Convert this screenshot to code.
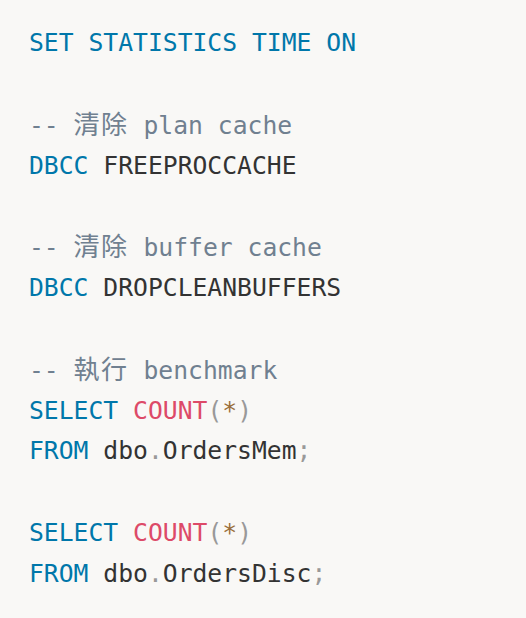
const kw = 'text-[#0077aa]';
const fn = 'text-[#dd4a68]';
const pu = 'text-[#999999]';
const op = 'text-[#9a6e3a]';
const cm = 'text-[#708090]';

function Line({ children }) {
    return <div className="h-[40.85px] whitespace-pre">{children}</div>;
}

// CJK glyphs in the comments run a little wider than 1em
function Han({ children }) {
    return <span className="text-[26px] tracking-[1.5px]">{children}</span>;
}

export default function App() {
    return (
        <div className="w-[526px] h-[618px] bg-[#f9f8f6] overflow-hidden">
            <pre className="pt-[23px] pl-[29px] text-[24.7px] leading-[40.85px] text-[#333333] font-['DejaVu_Sans_Mono','Noto_Sans_CJK_TC',monospace]">
                <Line><span className={kw}>SET</span> <span className={kw}>STATISTICS</span> <span className={kw}>TIME</span> <span className={kw}>ON</span></Line>
                <Line> </Line>
                <Line><span className={cm}>-- <Han>清除</Han> plan cache</span></Line>
                <Line><span className={kw}>DBCC</span> FREEPROCCACHE</Line>
                <Line> </Line>
                <Line><span className={cm}>-- <Han>清除</Han> buffer cache</span></Line>
                <Line><span className={kw}>DBCC</span> DROPCLEANBUFFERS</Line>
                <Line> </Line>
                <Line><span className={cm}>-- <Han>執行</Han> benchmark</span></Line>
                <Line><span className={kw}>SELECT</span> <span className={fn}>COUNT</span><span className={pu}>(</span><span className={op}>*</span><span className={pu}>)</span></Line>
                <Line><span className={kw}>FROM</span> dbo<span className={pu}>.</span>OrdersMem<span className={pu}>;</span></Line>
                <Line> </Line>
                <Line><span className={kw}>SELECT</span> <span className={fn}>COUNT</span><span className={pu}>(</span><span className={op}>*</span><span className={pu}>)</span></Line>
                <Line><span className={kw}>FROM</span> dbo<span className={pu}>.</span>OrdersDisc<span className={pu}>;</span></Line>
            </pre>
        </div>
    );
}
